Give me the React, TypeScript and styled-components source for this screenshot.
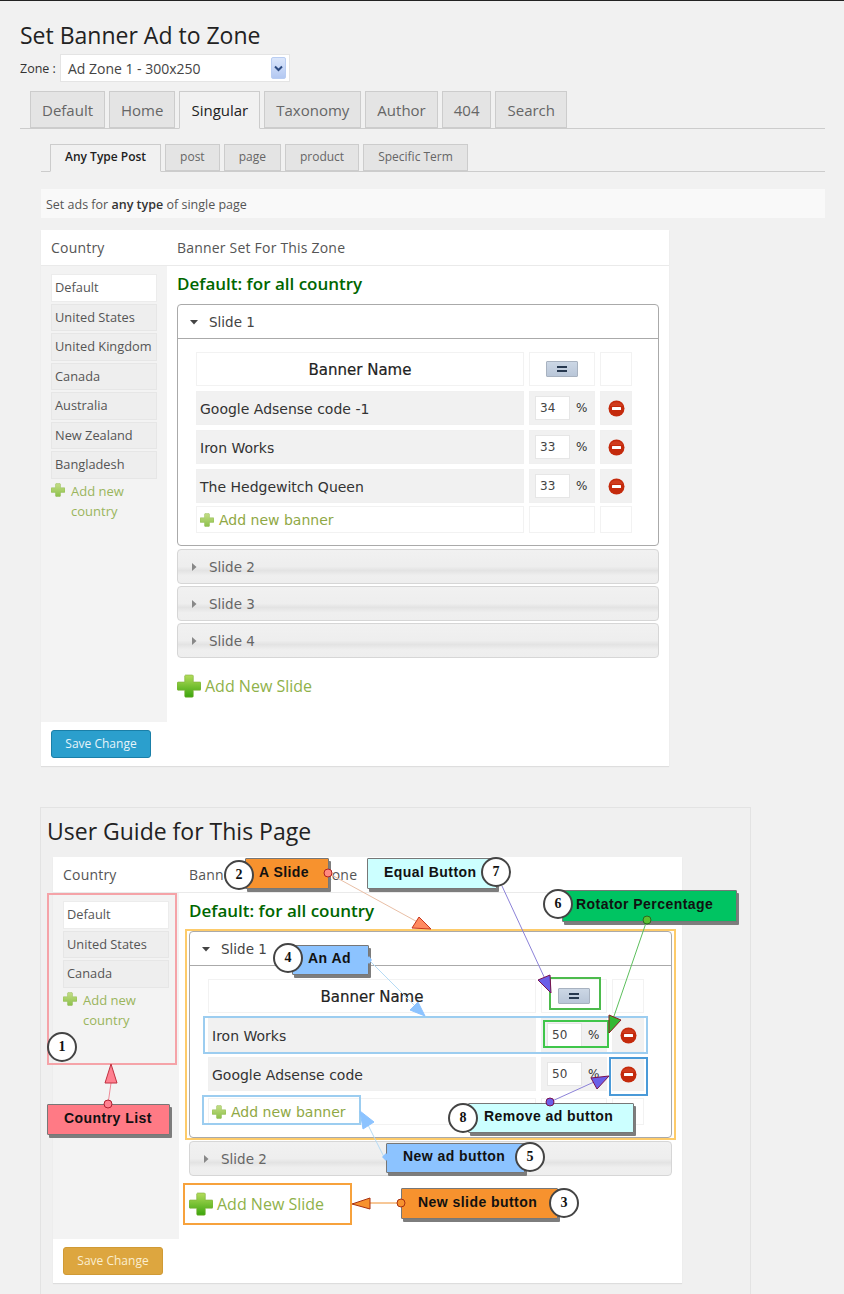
import React from 'react'
import styled, { createGlobalStyle } from 'styled-components'

const GlobalStyle = createGlobalStyle`
  html, body { margin: 0; padding: 0; background: #f1f1f1; }
  * { box-sizing: border-box; }
`

const Page = styled.div`
  position: relative;
  width: 844px;
  height: 1294px;
  overflow: hidden;
  padding: 0 19px 0 20px;
  border-top: 1px solid #222;
  background: #f1f1f1;
  color: #333;
  font-family: "Open Sans", sans-serif;
`

const Title = styled.h1`
  margin: 17px 0 0;
  height: 36px;
  font-size: 23px;
  line-height: 34px;
  font-weight: 400;
  color: #222;
`

const ZoneRow = styled.div`
  display: flex;
  align-items: center;
  gap: 4px;
  height: 28px;
  font-size: 12.5px;
  color: #333;
`

const ZoneSelect = styled.div`
  display: flex;
  align-items: center;
  justify-content: space-between;
  width: 230px;
  height: 28px;
  padding: 0 2px 0 7px;
  background: #fff;
  border: 1px solid #e4e4e4;
  font-size: 14px;
  color: #444;
`

const SelectArrow = styled.span`
  display: flex;
  align-items: center;
  justify-content: center;
  width: 15px;
  height: 22px;
  margin-right: 1px;
  border-radius: 2px;
  background: linear-gradient(#dbe6fb, #b3c8f2);
  border: 1px solid #b9cdf2;
`

const TabBar = styled.div<{ $size: 'main' | 'sub' }>`
  display: flex;
  align-items: flex-end;
  gap: 4px;
  height: ${(p) => (p.$size === 'main' ? '38px' : '28px')};
  margin: ${(p) => (p.$size === 'main' ? '9px 0 0' : '15px 0 0 21px')};
  padding-left: ${(p) => (p.$size === 'main' ? '10px' : '9px')};
  border-bottom: 1px solid #ccc;
`

const Tab = styled.div<{ $size: 'main' | 'sub'; $active?: boolean }>`
  height: ${(p) => {
    const base = p.$size === 'main' ? 37 : 27
    return `${p.$active ? base + 1 : base}px`
  }};
  margin-bottom: ${(p) => (p.$active ? '-1px' : '0')};
  padding: ${(p) => (p.$size === 'main' ? '0 11px' : '0 14px')};
  border: 1px solid #ccc;
  border-bottom: ${(p) => (p.$active ? '1px solid #f1f1f1' : '1px solid #ccc')};
  background: ${(p) => (p.$active ? '#f1f1f1' : '#e4e4e4')};
  color: ${(p) => (p.$active ? '#222' : '#666')};
  font-size: ${(p) => (p.$size === 'main' ? '15px' : '12px')};
  font-weight: ${(p) => (p.$active && p.$size === 'sub' ? 600 : 400)};
  line-height: ${(p) => (p.$size === 'main' ? '37px' : '24px')};
  white-space: nowrap;
`

const Note = styled.div`
  height: 29px;
  margin: 17px 0 12px 21px;
  padding-left: 5px;
  background: #f9f9f9;
  font-size: 12.5px;
  line-height: 31px;
  color: #555;

  b {
    font-weight: 600;
    color: #333;
  }
`

const Panel = styled.section<{ $width: number; $offset: number }>`
  width: ${(p) => p.$width}px;
  margin-left: ${(p) => p.$offset}px;
  background: #fff;
  box-shadow: 0 1px 1px rgba(0, 0, 0, 0.08);
`

const PanelHead = styled.div`
  display: grid;
  grid-template-columns: 126px 1fr;
  height: 36px;
  border-bottom: 1px solid #eaeaea;
  font-size: 14px;
  letter-spacing: 0.2px;
  line-height: 36px;
  color: #555;

  span {
    padding-left: 10px;
  }
`

const PanelBody = styled.div<{ $height: number }>`
  display: grid;
  grid-template-columns: 126px 1fr;
  height: ${(p) => p.$height}px;
`

const Sidebar = styled.aside`
  padding: 8px 10px;
  background: #f3f3f3;
`

const CountryItem = styled.div<{ $active?: boolean }>`
  height: 27.5px;
  margin-bottom: 2px;
  padding-left: 3px;
  border: 1px solid ${(p) => (p.$active ? '#ececec' : '#e6e6e6')};
  background: ${(p) => (p.$active ? '#fff' : '#eee')};
  font-size: 12.8px;
  line-height: 25px;
  color: #555;
  white-space: nowrap;
`

const AddCountry = styled.div`
  display: flex;
  gap: 6px;
  font-size: 13px;
  line-height: 20px;
  color: #9ab55c;

  svg {
    flex: none;
    margin-top: 2px;
  }
  span {
    flex: none;
    width: 60px;
  }
`

const Main = styled.div`
  padding: 8px 10px 0;
`

const MainHeading = styled.h3`
  margin: 0 0 10px;
  height: 20px;
  font-size: 17px;
  font-weight: 600;
  line-height: 19px;
  color: #060;
`

const SlideOpen = styled.div`
  margin-bottom: 3px;
  border: 1px solid #aaa;
  border-radius: 4px;
  background: #fff;
`

const SlideHead = styled.div<{ $open?: boolean }>`
  display: flex;
  align-items: center;
  gap: 11px;
  height: ${(p) => (p.$open ? '34px' : '33px')};
  padding-left: 12px;
  font-family: "DejaVu Sans", sans-serif;
  font-size: 13.5px;
  color: ${(p) => (p.$open ? '#444' : '#666')};
  border-bottom: ${(p) => (p.$open ? '1px solid #aaa' : 'none')};
`

const SlideClosed = styled.div`
  margin-bottom: 2px;
  border: 1px solid #d6d6d6;
  border-radius: 4px;
  background: linear-gradient(#f1f1f1 0%, #eeeeee 50%, #e3e3e3 62%, #efefef 78%, #eeeeee 100%);
`

const SlideTable = styled.div<{ $addGap: number }>`
  display: grid;
  grid-template-columns: 328px 66px 32px;
  grid-auto-rows: min-content;
  column-gap: 5px;
  row-gap: 5px;
  padding: 13px 0 12px 18px;
  font-family: "DejaVu Sans", sans-serif;
  font-size: 14px;
  color: #333;

  & > div:nth-last-child(-n + 3) {
    height: 27px;
    margin-top: ${(p) => p.$addGap - 5}px;
  }
`

const Cell = styled.div<{ $plain?: boolean }>`
  display: flex;
  align-items: center;
  height: 34px;
  padding-left: 3px;
  border: 1px solid ${(p) => (p.$plain ? '#f2f2f2' : '#f0f0f0')};
  background: ${(p) => (p.$plain ? '#fff' : '#f1f1f1')};
`

const NameCell = styled(Cell)`
  padding-top: 2px;
`

const NameHead = styled(NameCell)`
  justify-content: center;
  font-weight: 500;
  font-size: 15px;
  color: #222;
  padding-left: 0;
  -webkit-text-stroke: 0.2px #222;
`

const CenterCell = styled(Cell)`
  justify-content: center;
  padding-left: 0;
`

const PercentCell = styled(Cell)`
  gap: 6px;
  padding-left: 5px;
  font-size: 12px;
`

const PercentBox = styled.div`
  width: 35px;
  height: 24px;
  padding-left: 4px;
  border: 1px solid #e6e6e6;
  background: #fff;
  line-height: 22px;
  color: #444;
`

const EqualButton = styled.div`
  display: flex;
  flex-direction: column;
  align-items: center;
  justify-content: center;
  gap: 2px;
  width: 32px;
  height: 16px;
  border: 1px solid #a8b2c0;
  border-radius: 1px;
  background: linear-gradient(#ccd7e5, #b9c6d8);

  i {
    display: block;
    width: 10px;
    height: 2px;
    background: #27384f;
  }
`

const AddBanner = styled.span`
  margin-left: 5px;
  font-size: 14px;
  color: #8fa845;
  white-space: nowrap;
`

const AddSlide = styled.div`
  display: flex;
  align-items: center;
  gap: 4px;
  height: 24px;
  margin-top: 16px;
  font-size: 16px;
  color: #8fb14a;
  white-space: nowrap;
`

const PanelFoot = styled.div`
  height: 44px;
  padding: 8px 10px;
`

const SaveButton = styled.div<{ $tone: 'blue' | 'gold' }>`
  width: 100px;
  height: 28px;
  border: 1px solid ${(p) => (p.$tone === 'blue' ? '#1a7fa8' : '#d09a35')};
  border-radius: 3px;
  background: ${(p) => (p.$tone === 'blue' ? '#2b9fcd' : '#dda63f')};
  color: ${(p) => (p.$tone === 'blue' ? '#e6f4fa' : '#fbeed0')};
  font-size: 12px;
  line-height: 26px;
  text-align: center;
`

const GuideBox = styled.section`
  width: 711px;
  height: 520px;
  margin: 41px 0 0 20px;
  border: 1px solid #e3e3e3;
  background: #f0f0f0;
`

const GuideTitle = styled.h2`
  margin: 6px 0 9px 6px;
  height: 34px;
  font-size: 23px;
  font-weight: 400;
  line-height: 34px;
  color: #222;
`

/* annotation layer, everything below sits over the guide screenshot */
const Frame = styled.div<{ $x: number; $y: number; $w: number; $h: number; $c: string }>`
  position: absolute;
  left: ${(p) => p.$x}px;
  top: ${(p) => p.$y}px;
  width: ${(p) => p.$w}px;
  height: ${(p) => p.$h}px;
  border: 2px solid ${(p) => p.$c};
`

const Callout = styled.div<{ $x: number; $y: number; $w: number; $h: number; $bg: string; $pad: number }>`
  position: absolute;
  left: ${(p) => p.$x}px;
  top: ${(p) => p.$y}px;
  width: ${(p) => p.$w}px;
  height: ${(p) => p.$h}px;
  padding-left: ${(p) => p.$pad}px;
  border: 1px solid #777;
  border-radius: 1px;
  background: ${(p) => p.$bg};
  box-shadow: 2px 3px 0 #7d7d7d;
  font-family: "Liberation Sans", sans-serif;
  font-size: 14px;
  font-weight: 700;
  letter-spacing: 0.45px;
  line-height: ${(p) => p.$h - 5}px;
  color: #111;
  white-space: nowrap;
`

const Badge = styled.div<{ $x: number; $y: number }>`
  position: absolute;
  left: ${(p) => p.$x - 15}px;
  top: ${(p) => p.$y - 15}px;
  width: 30px;
  height: 30px;
  border: 2px solid #444;
  border-radius: 50%;
  background: #fff;
  font-family: "Liberation Serif", serif;
  font-size: 14px;
  font-weight: 700;
  line-height: 26px;
  text-align: center;
  color: #111;
`

const ArrowLayer = styled.svg`
  position: absolute;
  left: 0;
  top: 0;
  pointer-events: none;
`

const PlusIcon = ({ size, id }: { size: number; id: string }) => (
  <svg width={size} height={size} viewBox="0 0 24 24">
    <defs>
      <linearGradient id={id} x1="0" y1="0" x2="0" y2="1">
        <stop offset="0" stopColor={size > 20 ? '#b4dc5c' : '#c4de86'} />
        <stop offset="1" stopColor={size > 20 ? '#3ba50c' : '#8cc04a'} />
      </linearGradient>
    </defs>
    <path
      d="M8.500 1h7l.8.8V8h6.900l.8.8v6.600l-.8.8h-6.900v6.200l-.8.8h-7l-.8-.8v-6.200H.8L0 15.400V8.800L.8 8h6.900V1.800z"
      fill={`url(#${id})`}
      stroke="#7fae3a"
      strokeWidth="0.6"
    />
  </svg>
)

const MinusIcon = () => (
  <svg width="17" height="17" viewBox="0 0 17 17">
    <circle cx="8.500" cy="8.500" r="8" fill="#c42a0c" />
    <path d="M2 6a7 6 0 0 1 13 0z" fill="#d8492a" opacity="0.6" />
    <rect x="4" y="7" width="9" height="3" rx="0.500" fill="#fff" />
  </svg>
)

const SlideCaret = ({ open }: { open?: boolean }) => (
  <svg width="8" height="8" viewBox="0 0 8 8">
    {open ? <path d="M0 2h8L4 6.500z" fill="#444" /> : <path d="M2 0l4.500 4L2 8z" fill="#888" />}
  </svg>
)

type BannerRow = { name: string; pct: number }

type BannerPanelProps = {
  prefix: string
  width: number
  offset: number
  countries: string[]
  rows: BannerRow[]
  slides: number[]
  addGap: number
  sideHeight: number
  tone: 'blue' | 'gold'
}

const BannerPanel = ({ prefix, width, offset, countries, rows, slides, addGap, sideHeight, tone }: BannerPanelProps) => (
  <Panel $width={width} $offset={offset}>
    <PanelHead>
      <span>Country</span>
      <span>Banner Set For This Zone</span>
    </PanelHead>
    <PanelBody $height={sideHeight}>
      <Sidebar>
        {countries.map((c, i) => (
          <CountryItem key={c} $active={i === 0}>{c}</CountryItem>
        ))}
        <AddCountry>
          <PlusIcon size={14} id={`${prefix}-c`} />
          <span>Add new country</span>
        </AddCountry>
      </Sidebar>
      <Main>
        <MainHeading>Default: for all country</MainHeading>
        <SlideOpen>
          <SlideHead $open>
            <SlideCaret open />
            Slide 1
          </SlideHead>
          <SlideTable $addGap={addGap}>
            <NameHead $plain>Banner Name</NameHead>
            <CenterCell $plain><EqualButton><i /><i /></EqualButton></CenterCell>
            <Cell $plain />
            {rows.map((r) => (
              <React.Fragment key={r.name}>
                <NameCell>{r.name}</NameCell>
                <PercentCell>
                  <PercentBox>{r.pct}</PercentBox>%
                </PercentCell>
                <CenterCell><MinusIcon /></CenterCell>
              </React.Fragment>
            ))}
            <Cell $plain>
              <PlusIcon size={14} id={`${prefix}-b`} />
              <AddBanner>Add new banner</AddBanner>
            </Cell>
            <Cell $plain />
            <Cell $plain />
          </SlideTable>
        </SlideOpen>
        {slides.map((n) => (
          <SlideClosed key={n}>
            <SlideHead>
              <SlideCaret />
              Slide {n}
            </SlideHead>
          </SlideClosed>
        ))}
        <AddSlide>
          <PlusIcon size={24} id={`${prefix}-s`} />
          Add New Slide
        </AddSlide>
      </Main>
    </PanelBody>
    <PanelFoot>
      <SaveButton $tone={tone}>Save Change</SaveButton>
    </PanelFoot>
  </Panel>
)

const mainTabs = ['Default', 'Home', 'Singular', 'Taxonomy', 'Author', '404', 'Search']
const subTabs = ['Any Type Post', 'post', 'page', 'product', 'Specific Term']

const frames = [
  { x: 47, y: 892, w: 130, h: 172, c: '#f5a3a8' },
  { x: 185, y: 928, w: 491, h: 211, c: '#fdcb6a' },
  { x: 203, y: 1015, w: 445, h: 38, c: '#9ccdf0' },
  { x: 549, y: 976, w: 52, h: 33, c: '#4dbb4d' },
  { x: 543, y: 1019, w: 66, h: 28, c: '#3fc64a' },
  { x: 609, y: 1056, w: 39, h: 39, c: '#4a9ad8' },
  { x: 202, y: 1094, w: 159, h: 30, c: '#9ccdf0' },
  { x: 183, y: 1182, w: 169, h: 42, c: '#f7a23c' },
]

const callouts = [
  { text: 'A Slide', x: 245, y: 857, w: 84, h: 31, bg: '#f7922e', pad: 13 },
  { text: 'Equal Button', x: 367, y: 857, w: 130, h: 31, bg: '#ccffff', pad: 16 },
  { text: 'Rotator Percentage', x: 562, y: 889, w: 175, h: 32, bg: '#00c462', pad: 13 },
  { text: 'An Ad', x: 292, y: 944, w: 77, h: 30, bg: '#8cc3ff', pad: 15 },
  { text: 'Country List', x: 47, y: 1103, w: 123, h: 31, bg: '#ff7a85', pad: 16 },
  { text: 'Remove ad button', x: 468, y: 1102, w: 166, h: 30, bg: '#ccffff', pad: 15 },
  { text: 'New ad button', x: 386, y: 1142, w: 139, h: 30, bg: '#8cc3ff', pad: 16 },
  { text: 'New slide button', x: 401, y: 1187, w: 157, h: 31, bg: '#f7922e', pad: 16 },
]

const badges = [
  { n: 1, x: 62, y: 1046 },
  { n: 2, x: 239, y: 874 },
  { n: 3, x: 564, y: 1202 },
  { n: 4, x: 288, y: 957 },
  { n: 5, x: 530, y: 1156 },
  { n: 6, x: 558, y: 903 },
  { n: 7, x: 496, y: 871 },
  { n: 8, x: 463, y: 1117 },
]

const arrows = [
  { from: [328, 872], to: [423, 924], c: '#e9bfa6', head: '412,927 431,928 419,916', fill: '#ff8a60', stroke: '#c8351a' },
  { from: [502, 885], to: [546, 980], c: '#8c82d8', head: '538,979 550,974 551,992', fill: '#6a5fe8', stroke: '#7a1050' },
  { from: [647, 919], to: [613, 1018], c: '#5cbf5c', head: '609,1014 621,1019 609,1032', fill: '#33b833', stroke: '#8a1a20' },
  { from: [369, 959], to: [415, 1005], c: '#b5dbf5', head: '410,1009 425,1015 418,1001', fill: '#8cc3ff', stroke: '#8cc3ff' },
  { from: [108, 1103], to: [111, 1082], c: '#f08a98', head: '105,1082 117,1082 111,1063', fill: '#ff8090', stroke: '#c03040' },
  { from: [384, 1156], to: [368, 1124], c: '#b5dbf5', head: '360,1110 374,1121 363,1128', fill: '#8cc3ff', stroke: '#8cc3ff' },
  { from: [550, 1101], to: [594, 1081], c: '#8c82d8', head: '591,1077 609,1075 597,1088', fill: '#6a5fe8', stroke: '#7a1050' },
  { from: [401, 1202], to: [370, 1202], c: '#ee8f2e', head: '352,1203 370,1197 370,1208', fill: '#f7922e', stroke: '#a83010' },
]

const dots = [
  { x: 328, y: 872, fill: '#ff8a80', stroke: '#b02020' },
  { x: 647, y: 919, fill: '#5cc030', stroke: '#2a6a20' },
  { x: 108, y: 1103, fill: '#ff8090', stroke: '#b02030' },
  { x: 550, y: 1101, fill: '#6a5fe8', stroke: '#7a1050' },
  { x: 401, y: 1202, fill: '#f7922e', stroke: '#a83010' },
]

const diamonds = ['369,955 372,959 369,963 366,959', '386,1152 389,1156 386,1160 382,1156']

const App = () => (
  <Page>
    <GlobalStyle />
    <Title>Set Banner Ad to Zone</Title>
    <ZoneRow>
      Zone :
      <ZoneSelect>
        Ad Zone 1 - 300x250
        <SelectArrow>
          <svg width="9" height="7" viewBox="0 0 9 7">
            <path d="M1 1.500l3.500 3.500L8 1.500" fill="none" stroke="#2c4a80" strokeWidth="2" />
          </svg>
        </SelectArrow>
      </ZoneSelect>
    </ZoneRow>
    <TabBar $size="main">
      {mainTabs.map((t) => (
        <Tab key={t} $size="main" $active={t === 'Singular'}>{t}</Tab>
      ))}
    </TabBar>
    <TabBar $size="sub">
      {subTabs.map((t, i) => (
        <Tab key={t} $size="sub" $active={i === 0}>{t}</Tab>
      ))}
    </TabBar>
    <Note>Set ads for <b>any type</b> of single page</Note>
    <BannerPanel
      prefix="top"
      width={628}
      offset={21}
      countries={['Default', 'United States', 'United Kingdom', 'Canada', 'Australia', 'New Zealand', 'Bangladesh']}
      rows={[
        { name: 'Google Adsense code -1', pct: 34 },
        { name: 'Iron Works', pct: 33 },
        { name: 'The Hedgewitch Queen', pct: 33 },
      ]}
      slides={[2, 3, 4]}
      addGap={3}
      sideHeight={456}
      tone="blue"
    />
    <GuideBox>
      <GuideTitle>User Guide for This Page</GuideTitle>
      <BannerPanel
        prefix="guide"
        width={629}
        offset={12}
        countries={['Default', 'United States', 'Canada']}
        rows={[
          { name: 'Iron Works', pct: 50 },
          { name: 'Google Adsense code', pct: 50 },
        ]}
        slides={[2]}
        addGap={7}
        sideHeight={346}
        tone="gold"
      />
    </GuideBox>

    {frames.map((f) => (
      <Frame key={`${f.x}-${f.y}`} $x={f.x} $y={f.y} $w={f.w} $h={f.h} $c={f.c} />
    ))}
    {callouts.map((c) => (
      <Callout key={c.text} $x={c.x} $y={c.y} $w={c.w} $h={c.h} $bg={c.bg} $pad={c.pad}>{c.text}</Callout>
    ))}
    <ArrowLayer width="844" height="1294" viewBox="0 0 844 1294">
      {arrows.map((a) => (
        <g key={a.head}>
          <line x1={a.from[0]} y1={a.from[1]} x2={a.to[0]} y2={a.to[1]} stroke={a.c} strokeWidth="1" />
          <polygon points={a.head} fill={a.fill} stroke={a.stroke} strokeWidth="1" />
        </g>
      ))}
      {dots.map((d) => (
        <circle key={d.x} cx={d.x} cy={d.y} r="4" fill={d.fill} stroke={d.stroke} />
      ))}
      {diamonds.map((d) => (
        <polygon key={d} points={d} fill="#8cc3ff" />
      ))}
    </ArrowLayer>
    {badges.map((b) => (
      <Badge key={b.n} $x={b.x} $y={b.y}>{b.n}</Badge>
    ))}
  </Page>
)

export default App
